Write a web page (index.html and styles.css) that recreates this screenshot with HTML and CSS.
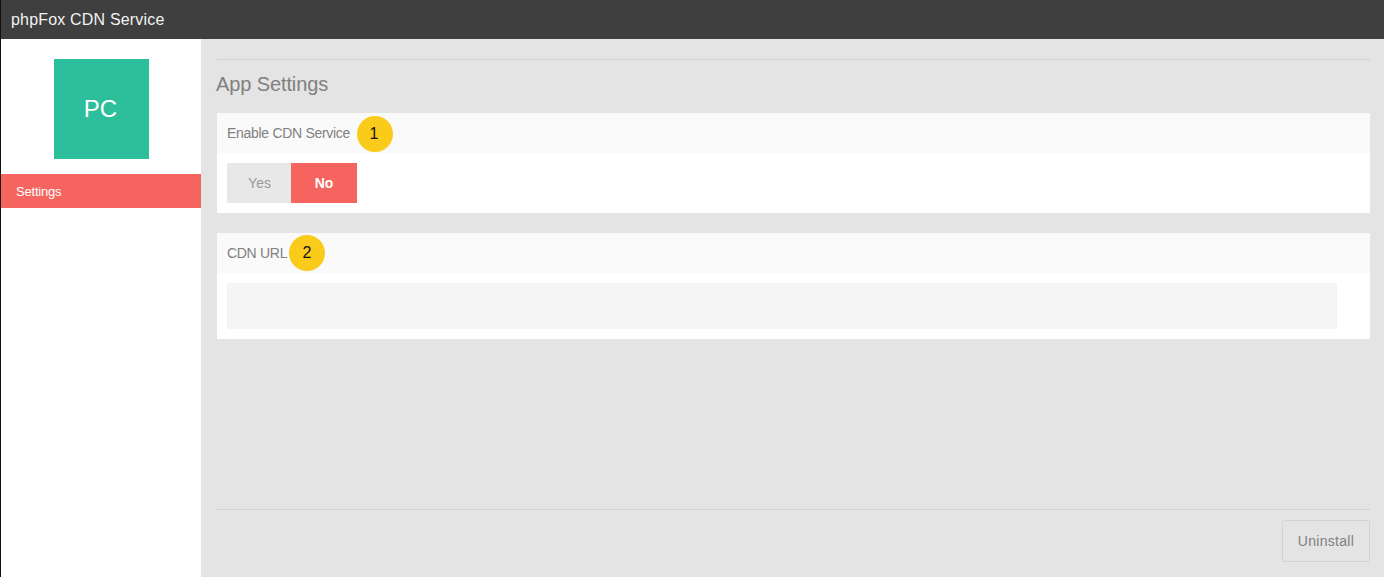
FILE: index.html
```html
<!DOCTYPE html>
<html lang="en">
<head>
<meta charset="utf-8">
<title>phpFox CDN Service</title>
<link rel="stylesheet" href="styles.css">
</head>
<body>
<div class="app">
  <header class="topbar">phpFox CDN Service</header>
  <div class="layout">
    <aside class="sidebar">
      <div class="logo">PC</div>
      <nav class="nav"><a class="nav-item">Settings</a></nav>
    </aside>
    <main class="main">
      <div class="content">
        <h1 class="title">App Settings</h1>
        <section class="panel panel-switch">
          <div class="panel-head">Enable CDN Service<span class="badge badge-one">1</span></div>
          <div class="panel-body">
            <div class="toggle"><span class="toggle-yes">Yes</span><span class="toggle-no">No</span></div>
          </div>
        </section>
        <section class="panel">
          <div class="panel-head">CDN URL<span class="badge badge-two">2</span></div>
          <div class="panel-body"><div class="input"></div></div>
        </section>
      </div>
      <footer class="footer"><button class="uninstall" type="button">Uninstall</button></footer>
    </main>
  </div>
</div>
</body>
</html>
```
FILE: styles.css
```css
* { box-sizing: border-box; }
html, body { margin: 0; height: 100%; }
body {
  font-family: "Liberation Sans", Arial, sans-serif;
  background: #e4e4e4;
  overflow: hidden;
}
.app {
  height: 577px;
  display: flex;
  flex-direction: column;
  border-left: 1px solid #111;
}
.topbar {
  height: 39px;
  flex: none;
  background: #3f3f3f;
  color: #f2f2f2;
  font-size: 16px;
  line-height: 39px;
  padding-left: 10px;
  letter-spacing: 0.18px;
}
.layout { flex: 1; display: flex; min-height: 0; }
.sidebar { width: 200px; flex: none; background: #fff; padding-top: 20px; }
.logo {
  width: 95px;
  height: 100px;
  margin-left: 53px;
  padding-right: 2px;
  background: #2dbe9b;
  color: #fff;
  font-size: 24px;
  display: flex;
  align-items: center;
  justify-content: center;
}
.nav { margin-top: 15px; }
.nav-item {
  display: block;
  height: 34px;
  line-height: 35px;
  padding-left: 15px;
  background: #f5645e;
  color: #fff;
  font-size: 13px;
  letter-spacing: -0.2px;
}
.main {
  flex: 1;
  min-width: 0;
  display: flex;
  flex-direction: column;
  padding: 20px 14px 15px 16px;
}
.content { flex: 1; border-top: 1px solid #d2d2d2; }
.title {
  margin: 0 0 0 -1px;
  height: 53px;
  padding-top: 12px;
  font-size: 20px;
  line-height: 24px;
  font-weight: 400;
  color: #808080;
  letter-spacing: -0.11px;
}
.panel { background: #fff; }
.panel-switch { margin-bottom: 20px; }
.panel-head {
  position: relative;
  height: 40px;
  line-height: 40px;
  padding-left: 10px;
  background: #fafafa;
  color: #808080;
  font-size: 14px;
  letter-spacing: -0.3px;
}
.panel-body { padding: 10px 33px 10px 10px; }
.badge {
  position: absolute;
  width: 36px;
  height: 36px;
  border-radius: 50%;
  background: #facb1a;
  color: #111;
  font-size: 16px;
  line-height: 36px;
  text-align: center;
  letter-spacing: 0;
}
.badge-one { left: 140px; top: 3px; padding-right: 2px; }
.badge-two { left: 72px; top: 2px; }
.toggle { display: flex; height: 40px; font-size: 14px; line-height: 40px; text-align: center; }
.toggle-yes { width: 64px; padding-left: 1px; background: #e8e8e8; color: #999; }
.toggle-no { width: 66px; background: #f5645e; color: #fff; font-weight: 700; }
.input { height: 46px; background: #f5f5f5; }
.footer {
  height: 53px;
  flex: none;
  border-top: 1px solid #d2d2d2;
  display: flex;
  justify-content: flex-end;
  align-items: flex-end;
}
.uninstall {
  width: 88px;
  height: 42px;
  padding: 0;
  border: 1px solid #d2d2d2;
  border-radius: 3px;
  background: transparent;
  color: #808080;
  font-family: inherit;
  font-size: 14px;
  letter-spacing: 0.3px;
}
```
